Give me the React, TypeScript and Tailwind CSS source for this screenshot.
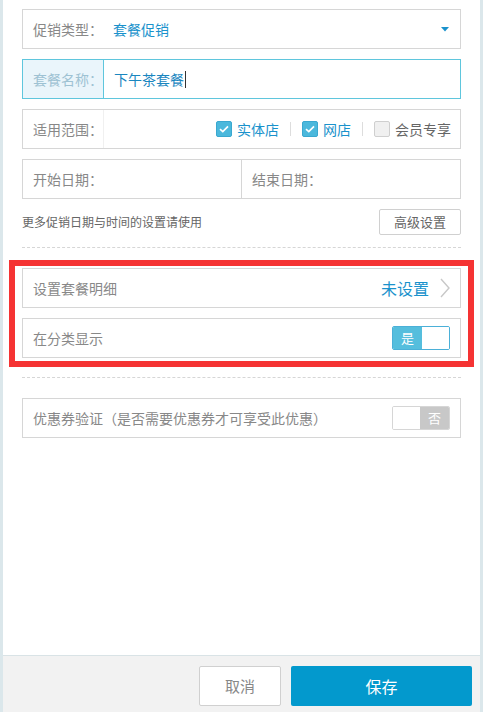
import React from "react";

const font = { fontFamily: '"Noto Sans CJK SC", "Noto Sans", sans-serif' };

function Check({ checked, label }: { checked: boolean; label: string }) {
  return (
    <div className="flex items-center gap-[5px]">
      <span
        className={
          checked
            ? "w-[16px] h-[16px] rounded-[2px] bg-[#4bb8dc] border border-[#3aa8d0] flex items-center justify-center"
            : "w-[16px] h-[16px] rounded-[2px] bg-[#f0f0f0] border border-[#cfcfcf]"
        }
      >
        {checked && (
          <svg width="10" height="8" viewBox="0 0 10 8">
            <path d="M1 4.2 L3.8 6.6 L9 1.4" stroke="#fff" strokeWidth="1.7" fill="none" />
          </svg>
        )}
      </span>
      <span className={checked ? "text-[14px] text-[#1a92cc]" : "text-[14px] text-[#666]"}>{label}</span>
    </div>
  );
}

export default function App() {
  return (
    <div className="w-[483px] h-[712px] bg-[#dbe7eb] flex flex-col pl-[3px] pr-[3px] overflow-hidden" style={font}>
      <div className="flex-1 bg-white flex flex-col pt-[9px]">
        <div className="flex flex-col px-[19px] gap-[10px]">
          <div className="h-[40px] border border-[#d6d6d6] flex items-center pl-[10px] pr-[11px]">
            <span className="text-[14px] text-[#888] w-[80px]">促销类型：</span>
            <span className="text-[14px] text-[#1a92cc] flex-1">套餐促销</span>
            <svg width="8" height="5" viewBox="0 0 8 5">
              <path d="M0 0 L8 0 L4 4.5 Z" fill="#1a92cc" />
            </svg>
          </div>
          <div className="h-[40px] border border-[#5fc6dd] flex items-stretch">
            <div className="w-[81px] bg-[#eaf5fb] border-r border-[#5fc6dd] flex items-center pl-[10px]">
              <span className="text-[14px] text-[#9ec2d3]">套餐名称：</span>
            </div>
            <div className="flex items-center pl-[10px]">
              <span className="text-[14px] text-[#1a86bf]">下午茶套餐</span>
              <span className="w-[1px] h-[17px] bg-[#333] ml-[1px]" />
            </div>
          </div>
          <div className="h-[40px] border border-[#d6d6d6] flex items-stretch">
            <div className="w-[81px] border-r border-[#f0f0f0] flex items-center pl-[10px]">
              <span className="text-[14px] text-[#888]">适用范围：</span>
            </div>
            <div className="flex-1 flex items-center justify-end pr-[9px]">
              <Check checked label="实体店" />
              <span className="w-[1px] h-[14px] bg-[#ddd] mx-[11px]" />
              <Check checked label="网店" />
              <span className="w-[1px] h-[14px] bg-[#ddd] mx-[11px]" />
              <Check checked={false} label="会员专享" />
            </div>
          </div>
          <div className="h-[40px] flex">
            <div className="w-[220px] border border-[#d6d6d6] flex items-center pl-[10px]">
              <span className="text-[14px] text-[#888]">开始日期：</span>
            </div>
            <div className="flex-1 border border-l-0 border-[#d6d6d6] flex items-center pl-[10px]">
              <span className="text-[14px] text-[#888]">结束日期：</span>
            </div>
          </div>
        </div>
        <div className="flex items-center justify-between px-[19px] mt-[10px]">
          <span className="text-[12px] text-[#666]">更多促销日期与时间的设置请使用</span>
          <button className="w-[82px] h-[26px] border border-[#d0d0d0] bg-white text-[13px] text-[#666] rounded-[2px] flex items-center justify-center">
            高级设置
          </button>
        </div>
        <div className="mx-[19px] mt-[12px] border-t border-dashed border-[#d6d6d6]" />
        <div className="mx-[6px] mt-[12px] border-[6px] border-[#f53333] px-[7px] pt-[2px] pb-[3px] flex flex-col gap-[10px]">
          <div className="h-[40px] border border-[#d6d6d6] flex items-center pl-[10px] pr-[9px]">
            <span className="text-[14px] text-[#888] flex-1">设置套餐明细</span>
            <span className="text-[16px] text-[#1a92cc]">未设置</span>
            <svg width="12" height="22" viewBox="0 0 12 22" className="ml-[10px]">
              <path d="M2 2 L10 11 L2 20" stroke="#c8c8c8" strokeWidth="1.4" fill="none" />
            </svg>
          </div>
          <div className="h-[40px] border border-[#d6d6d6] flex items-center pl-[10px] pr-[10px]">
            <span className="text-[14px] text-[#888] flex-1">在分类显示</span>
            <div className="w-[58px] h-[24px] border border-[#4bb0d8] flex rounded-[2px] overflow-hidden">
              <div className="w-[29px] bg-[#55bedd] flex items-center justify-center text-[13px] text-white">是</div>
              <div className="flex-1 bg-white" />
            </div>
          </div>
        </div>
        <div className="mx-[19px] mt-[10px] border-t border-dashed border-[#d6d6d6]" />
        <div className="mx-[19px] mt-[20px] h-[40px] border border-[#d6d6d6] flex items-center pl-[10px] pr-[10px]">
          <span className="text-[14px] text-[#888] flex-1">优惠券验证（是否需要优惠券才可享受此优惠）</span>
          <div className="w-[58px] h-[24px] border border-[#d6d6d6] flex rounded-[2px] overflow-hidden">
            <div className="flex-1 bg-white" />
            <div className="w-[29px] bg-[#c8c8c8] flex items-center justify-center text-[13px] text-white">否</div>
          </div>
        </div>
      </div>
      <div className="h-[57px] bg-[#f2f2f2] border-t border-[#d9e3e6] flex items-start justify-end pt-[10px] pr-[8px] gap-[10px]">
        <button className="w-[82px] h-[40px] bg-white border border-[#d0d0d0] rounded-[2px] text-[15px] text-[#888]">取消</button>
        <button className="w-[181px] h-[40px] bg-[#0399cd] rounded-[2px] text-[16px] text-white">保存</button>
      </div>
    </div>
  );
}
